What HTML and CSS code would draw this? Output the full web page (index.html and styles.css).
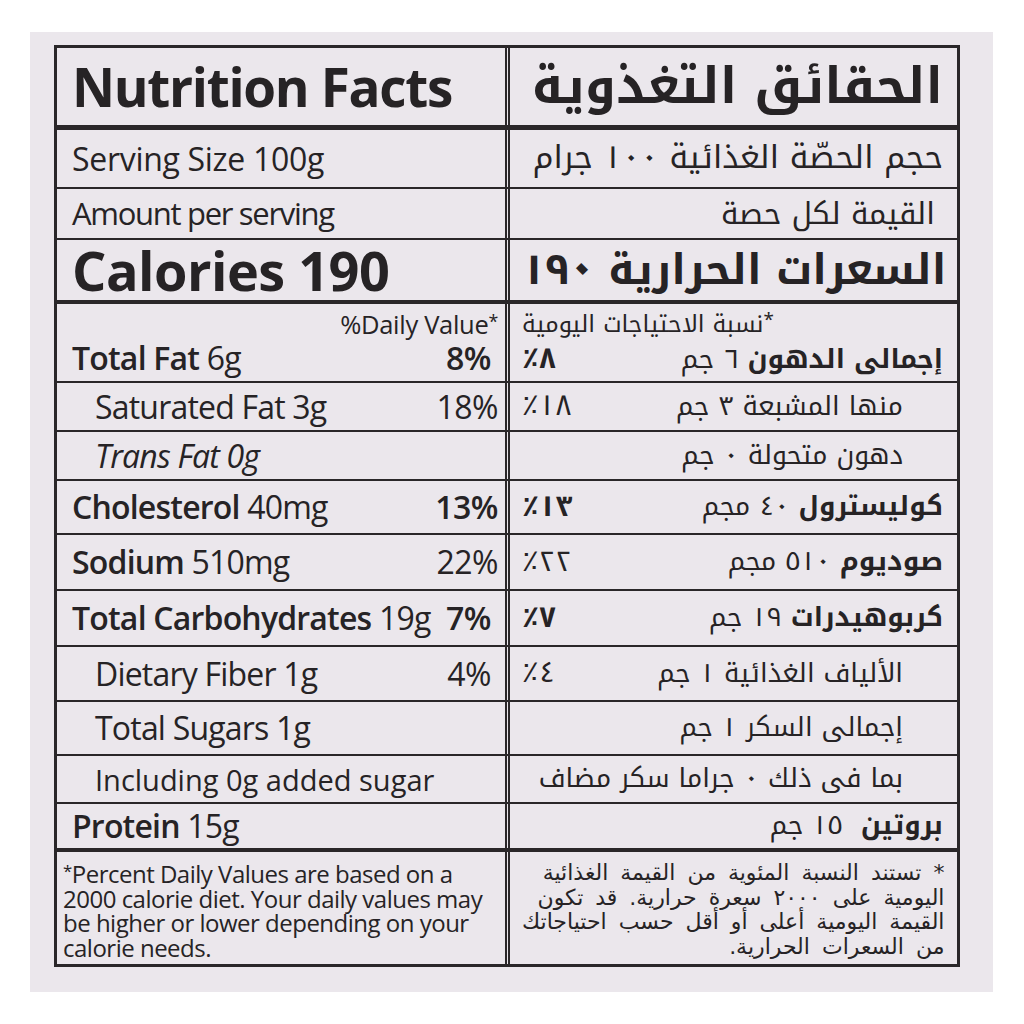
FILE: index.html
```html
<!DOCTYPE html>
<html lang="en">
<head>
<meta charset="utf-8">
<title>Nutrition Facts</title>
<link rel="stylesheet" href="styles.css">
</head>
<body>
<div class="panel">
  <div class="label">
    <div class="row r-title">
      <div class="en"><span class="title">Nutrition Facts</span></div>
      <div class="ar"><span class="ar-title">الحقائق التغذوية</span></div>
    </div>
    <div class="row r-serving">
      <div class="en"><span class="t serving">Serving Size 100g</span></div>
      <div class="ar"><span class="a32">حجم الحصّة الغذائية ١٠٠ جرام</span></div>
    </div>
    <div class="row r-amount">
      <div class="en"><span class="t amount">Amount per serving</span></div>
      <div class="ar ar-amount"><span class="a30">القيمة لكل حصة</span></div>
    </div>
    <div class="row r-cal">
      <div class="en"><span class="title cal">Calories 190</span></div>
      <div class="ar"><span class="ar-title ar-cal">السعرات الحرارية ١٩٠</span></div>
    </div>
    <div class="row r-fat">
      <div class="en stack">
        <div class="dvh">%Daily Value<sup>*</sup></div>
        <div class="line"><span class="t"><span class="sb">Total Fat</span> 6g</span><span class="pct sb one">8%</span></div>
      </div>
      <div class="ar stack">
        <div class="ar-dvh"><sup>*</sup>نسبة الاحتياجات اليومية</div>
        <div class="line"><span class="a26"><span class="ab">إجمالى الدهون</span> ٦ جم</span><span class="apct ab">٨٪</span></div>
      </div>
    </div>
    <div class="row r-sat">
      <div class="en sub"><span class="t">Saturated Fat 3g</span><span class="pct">18%</span></div>
      <div class="ar sub"><span class="a26">منها المشبعة ٣ جم</span><span class="apct">١٨٪</span></div>
    </div>
    <div class="row r-trans">
      <div class="en sub"><span class="t it">Trans Fat 0g</span></div>
      <div class="ar sub"><span class="a26">دهون متحولة ٠ جم</span></div>
    </div>
    <div class="row r-chol">
      <div class="en"><span class="t"><span class="sb">Cholesterol</span> 40mg</span><span class="pct sb">13%</span></div>
      <div class="ar"><span class="a26"><span class="ab">كوليسترول</span> ٤٠ مجم</span><span class="apct ab">١٣٪</span></div>
    </div>
    <div class="row r-sod">
      <div class="en"><span class="t"><span class="sb">Sodium</span> 510mg</span><span class="pct md">22%</span></div>
      <div class="ar"><span class="a26"><span class="ab">صوديوم</span> ٥١٠ مجم</span><span class="apct">٢٢٪</span></div>
    </div>
    <div class="row r-carb">
      <div class="en"><span class="t"><span class="sb">Total Carbohydrates</span> 19g</span><span class="pct sb one">7%</span></div>
      <div class="ar"><span class="a26"><span class="ab">كربوهيدرات</span> ١٩ جم</span><span class="apct ab">٧٪</span></div>
    </div>
    <div class="row r-fiber">
      <div class="en sub"><span class="t">Dietary Fiber 1g</span><span class="pct one">4%</span></div>
      <div class="ar sub"><span class="a26">الألياف الغذائية ١ جم</span><span class="apct">٤٪</span></div>
    </div>
    <div class="row r-sug">
      <div class="en sub"><span class="t">Total Sugars 1g</span></div>
      <div class="ar sub"><span class="a26">إجمالى السكر ١ جم</span></div>
    </div>
    <div class="row r-incl">
      <div class="en sub"><span class="t incl">Including 0g added sugar</span></div>
      <div class="ar sub"><span class="a26">بما فى ذلك ٠ جراما سكر مضاف</span></div>
    </div>
    <div class="row r-prot">
      <div class="en"><span class="t"><span class="sb">Protein</span> 15g</span></div>
      <div class="ar"><span class="a26"><span class="ab">بروتين</span>&nbsp; ١٥ جم</span></div>
    </div>
    <div class="row r-foot">
      <div class="en foot"><p class="note"><sup>*</sup>Percent Daily Values are based on a<br>2000 calorie diet. Your daily values may<br>be higher or lower depending on your<br>calorie needs.</p></div>
      <div class="ar foot"><p class="ar-note">* تستند النسبة المئوية من القيمة الغذائية<br>اليومية على ٢٠٠٠ سعرة حرارية. قد تكون<br>القيمة اليومية أعلى أو أقل حسب احتياجاتك<br>من السعرات الحرارية.</p></div>
    </div>
  </div>
</div>
</body>
</html>
```
FILE: styles.css
```css
html, body {
  margin: 0;
  padding: 0;
  background: #ffffff;
}

body {
  color: #262325;
  font-family: "Open Sans", "Noto Sans", sans-serif;
}

.panel {
  box-sizing: border-box;
  margin: 32px 31px 32px 30px;
  height: 960px;
  padding: 13px 33px 25px 24px;
  background: #ebe7ec;
}

.label {
  border: 3px solid #2a2729;
}

.row {
  box-sizing: border-box;
  display: grid;
  grid-template-columns: 453px 1fr;
  border-bottom: 2px solid #2a2729;
}

.r-title { height: 82px; border-bottom-width: 5px; }
.r-serving { height: 59px; }
.r-amount { height: 51px; }
.r-cal { height: 64px; border-bottom-width: 4px; }
.r-fat { height: 79px; }
.r-sat { height: 49px; }
.r-trans { height: 49px; }
.r-chol { height: 54px; }
.r-sod { height: 56px; }
.r-carb { height: 56px; }
.r-fiber { height: 55px; }
.r-sug { height: 54px; }
.r-incl { height: 48px; }
.r-prot { height: 48px; border-bottom-width: 4px; }
.r-foot { height: 112px; border-bottom: none; }

.en {
  box-sizing: border-box;
  border-right: 5px double #2a2729;
  display: flex;
  align-items: center;
  justify-content: space-between;
  padding: 0 7px 0 15px;
  white-space: nowrap;
}

.en.sub { padding-left: 38px; }

.ar {
  direction: rtl;
  display: flex;
  align-items: center;
  justify-content: space-between;
  padding: 0 14px 0 12px;
  font-family: "Noto Kufi Arabic", "Noto Sans Arabic", "DejaVu Sans", sans-serif;
  white-space: nowrap;
}

.ar.sub { padding-right: 54px; }
.ar.ar-amount { padding-right: 22px; }

.stack {
  flex-direction: column;
  align-items: stretch;
  justify-content: flex-start;
}

.line {
  display: flex;
  justify-content: space-between;
  align-items: baseline;
}

.title {
  font-size: 53px;
  font-weight: 700;
  line-height: 1;
  letter-spacing: -1.3px;
}

.title.cal {
  font-size: 54px;
  letter-spacing: -0.5px;
}

.t {
  font-size: 32px;
  line-height: 1;
  letter-spacing: -0.8px;
}

.t.serving { letter-spacing: -0.3px; }
.t.amount { font-size: 31px; letter-spacing: -1.3px; }
.t.incl { font-size: 29px; letter-spacing: 0; }

.it { font-style: italic; }
.sb { font-weight: 600; }
.md { font-weight: 500; }

.pct {
  font-size: 32px;
  line-height: 1;
  letter-spacing: -0.5px;
}

.pct.one { margin-right: 7px; }

.dvh {
  align-self: flex-end;
  font-size: 25.5px;
  line-height: 1;
  margin-top: 8px;
  letter-spacing: -0.3px;
}

.dvh sup, .note sup {
  font-size: 0.7em;
  vertical-align: 0.35em;
  line-height: 0;
}

.r-fat .en .line { margin-top: 4px; }
.r-fat .ar .line { margin-top: 5px; }

.ar-title {
  font-size: 50px;
  font-weight: 700;
  line-height: 1;
}

.ar-title.ar-cal { font-size: 42px; }

.a32 { font-size: 32px; line-height: 1.2; }
.a30 { font-size: 30px; line-height: 1.2; }
.a26 { font-size: 26.5px; line-height: 1.2; }
.ab { font-weight: 700; }

.apct {
  font-size: 29px;
  line-height: 1.2;
}

.ar-dvh {
  align-self: flex-end;
  font-size: 23.5px;
  line-height: 1;
  margin-top: 9px;
}

.ar-dvh sup {
  font-size: 0.8em;
  vertical-align: 0.3em;
  line-height: 0;
}

.foot {
  align-items: flex-start;
}

.note {
  margin: 10px 0 0 -9px;
  font-size: 24px;
  line-height: 24.5px;
  letter-spacing: -0.5px;
}

.ar-note {
  margin: 9px 0 0 0;
  font-family: "DejaVu Sans", "Noto Kufi Arabic", sans-serif;
  font-size: 22px;
  line-height: 24.5px;
  word-spacing: 5px;
}
```
